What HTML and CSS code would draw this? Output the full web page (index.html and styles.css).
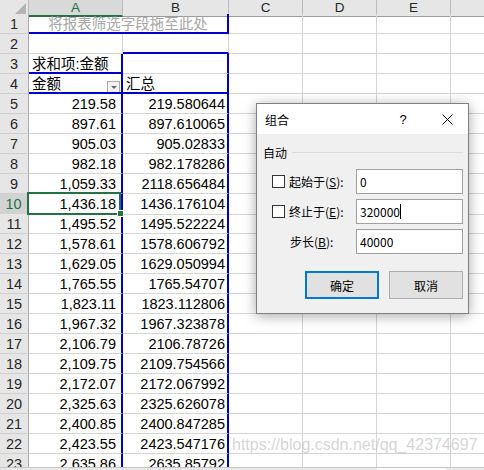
FILE: index.html
```html
<!DOCTYPE html>
<html lang="zh-CN">
<head>
    <meta charset="UTF-8">
    <title>数据透视表 - 组合</title>
    <link rel="stylesheet" href="styles.css">
</head>
<body>
    <div class="page">
        <div class="sheet">
            <div class="row head">
                <div class="corner">
                    <svg width="11" height="11" viewBox="0 0 11 11"><polygon points="11,0 11,11 0,11" fill="#b4b4b4"/></svg>
                </div>
                <div class="ch on">A</div><div class="ch">B</div><div class="ch">C</div><div class="ch">D</div><div class="ch">E</div><div class="ch"></div>
            </div>
            <div class="row">
                <div class="rh">1</div>
                <div class="c span2 filter bx-b bx-r">将报表筛选字段拖至此处</div>
                <div class="c"></div><div class="c"></div><div class="c"></div><div class="c"></div>
            </div>
            <div class="row">
                <div class="rh">2</div>
                <div class="c"></div><div class="c bx-b"></div>
                <div class="c"></div><div class="c"></div><div class="c"></div><div class="c"></div>
            </div>
            <div class="row">
                <div class="rh">3</div>
                <div class="c bx-b bx-r">求和项:金额</div><div class="c bx-r"></div>
                <div class="c"></div><div class="c"></div><div class="c"></div><div class="c"></div>
            </div>
            <div class="row">
                <div class="rh">4</div>
                <div class="c field-head bx-b bx-r"><span>金额</span><span class="drop"></span></div>
                <div class="c bx-b bx-r">汇总</div>
                <div class="c"></div><div class="c"></div><div class="c"></div><div class="c"></div>
            </div>
            <div class="row"><div class="rh">5</div><div class="c num bx-r">219.58</div><div class="c num bx-r">219.580644</div><div class="c"></div><div class="c"></div><div class="c"></div><div class="c"></div></div>
            <div class="row"><div class="rh">6</div><div class="c num bx-r">897.61</div><div class="c num bx-r">897.610065</div><div class="c"></div><div class="c"></div><div class="c"></div><div class="c"></div></div>
            <div class="row"><div class="rh">7</div><div class="c num bx-r">905.03</div><div class="c num bx-r">905.02833</div><div class="c"></div><div class="c"></div><div class="c"></div><div class="c"></div></div>
            <div class="row"><div class="rh">8</div><div class="c num bx-r">982.18</div><div class="c num bx-r">982.178286</div><div class="c"></div><div class="c"></div><div class="c"></div><div class="c"></div></div>
            <div class="row"><div class="rh">9</div><div class="c num bx-r">1,059.33</div><div class="c num bx-r">2118.656484</div><div class="c"></div><div class="c"></div><div class="c"></div><div class="c"></div></div>
            <div class="row"><div class="rh on">10</div><div class="c num bx-r active">1,436.18</div><div class="c num bx-r">1436.176104</div><div class="c"></div><div class="c"></div><div class="c"></div><div class="c"></div></div>
            <div class="row"><div class="rh">11</div><div class="c num bx-r">1,495.52</div><div class="c num bx-r">1495.522224</div><div class="c"></div><div class="c"></div><div class="c"></div><div class="c"></div></div>
            <div class="row"><div class="rh">12</div><div class="c num bx-r">1,578.61</div><div class="c num bx-r">1578.606792</div><div class="c"></div><div class="c"></div><div class="c"></div><div class="c"></div></div>
            <div class="row"><div class="rh">13</div><div class="c num bx-r">1,629.05</div><div class="c num bx-r">1629.050994</div><div class="c"></div><div class="c"></div><div class="c"></div><div class="c"></div></div>
            <div class="row"><div class="rh">14</div><div class="c num bx-r">1,765.55</div><div class="c num bx-r">1765.54707</div><div class="c"></div><div class="c"></div><div class="c"></div><div class="c"></div></div>
            <div class="row"><div class="rh">15</div><div class="c num bx-r">1,823.11</div><div class="c num bx-r">1823.112806</div><div class="c"></div><div class="c"></div><div class="c"></div><div class="c"></div></div>
            <div class="row"><div class="rh">16</div><div class="c num bx-r">1,967.32</div><div class="c num bx-r">1967.323878</div><div class="c"></div><div class="c"></div><div class="c"></div><div class="c"></div></div>
            <div class="row"><div class="rh">17</div><div class="c num bx-r">2,106.79</div><div class="c num bx-r">2106.78726</div><div class="c"></div><div class="c"></div><div class="c"></div><div class="c"></div></div>
            <div class="row"><div class="rh">18</div><div class="c num bx-r">2,109.75</div><div class="c num bx-r">2109.754566</div><div class="c"></div><div class="c"></div><div class="c"></div><div class="c"></div></div>
            <div class="row"><div class="rh">19</div><div class="c num bx-r">2,172.07</div><div class="c num bx-r">2172.067992</div><div class="c"></div><div class="c"></div><div class="c"></div><div class="c"></div></div>
            <div class="row"><div class="rh">20</div><div class="c num bx-r">2,325.63</div><div class="c num bx-r">2325.626078</div><div class="c"></div><div class="c"></div><div class="c"></div><div class="c"></div></div>
            <div class="row"><div class="rh">21</div><div class="c num bx-r">2,400.85</div><div class="c num bx-r">2400.847285</div><div class="c"></div><div class="c"></div><div class="c"></div><div class="c"></div></div>
            <div class="row"><div class="rh">22</div><div class="c num bx-r">2,423.55</div><div class="c num bx-r">2423.547176</div><div class="c"></div><div class="c"></div><div class="c"></div><div class="c"></div></div>
            <div class="row"><div class="rh">23</div><div class="c num bx-r">2,635.86</div><div class="c num bx-r">2635.85792</div><div class="c"></div><div class="c"></div><div class="c"></div><div class="c"></div></div>
        </div>
        <div class="tabbar">
            <div class="tb-left"></div><div class="tb-gap"></div><div class="tb-right"></div>
        </div>

        <div class="watermark">https://blog.csdn.net/qq_42374697</div>

        <div class="dialog">
            <div class="dlg-title">
                <span class="dlg-name">组合</span>
                <span class="dlg-help">?</span>
                <span class="dlg-close">
                    <svg width="11" height="11" viewBox="0 0 11 11"><path d="M0.5 0.5 L10.5 10.5 M10.5 0.5 L0.5 10.5" stroke="#000" stroke-width="1"/></svg>
                </span>
            </div>
            <div class="dlg-body">
                <div class="group"><span>自动</span><span class="rule"></span></div>
                <div class="field">
                    <span class="check"></span>
                    <span class="label">起始于(<u>S</u>):</span>
                    <div class="input">0</div>
                </div>
                <div class="field">
                    <span class="check"></span>
                    <span class="label">终止于(<u>E</u>):</span>
                    <div class="input">320000<span class="caret"></span></div>
                </div>
                <div class="field">
                    <span class="check hidden"></span>
                    <span class="label">步长(<u>B</u>):</span>
                    <div class="input">40000</div>
                </div>
                <div class="buttons">
                    <button class="btn default">确定</button>
                    <button class="btn">取消</button>
                </div>
            </div>
        </div>
    </div>
</body>
</html>
```

FILE: styles.css
```css
body {
    margin: 0;
    background-color: #fff;
    font-family: "Liberation Sans", "Noto Sans CJK SC", sans-serif;
    color: #000;
}
.page {
    position: relative;
    width: 484px;
    height: 470px;
    overflow: hidden;
}
.sheet {
    height: 467px;
    overflow: hidden;
}
.row {
    display: grid;
    grid-template-columns: 29px 94px 106px 74px 74px 74px 74px;
    height: 20px;
}
.row.head {
    height: 14px;
}
.row > div {
    box-sizing: border-box;
    overflow: hidden;
    white-space: nowrap;
}
.row > .ch,
.row > .rh {
    overflow: visible;
}
.corner {
    background-color: #e6e6e6;
    border-right: 1px solid #bcbcbc;
    border-bottom: 1px solid #9c9c9c;
    display: flex;
    justify-content: flex-end;
    align-items: flex-end;
    padding: 0 2px 2px 0;
}
.corner svg {
    display: block;
}
.ch {
    background-color: #e6e6e6;
    border-right: 1px solid #bcbcbc;
    border-bottom: 1px solid #9c9c9c;
    text-align: center;
    font-size: 13.5px;
    line-height: 15px;
    color: #262626;
}
.ch.on {
    background-color: #d9d9d9;
    color: #217346;
    border-bottom: 2px solid #217346;
}
.rh {
    background-color: #e6e6e6;
    border-right: 1px solid #ababab;
    border-bottom: 1px solid #cfcfcf;
    text-align: center;
    font-size: 14.5px;
    line-height: 18px;
    padding-top: 1px;
    color: #262626;
}
.rh.on {
    background-color: #d2d2d2;
    color: #217346;
    border-right: 2px solid #217346;
}
.c {
    border-right: 1px solid #d4d4d4;
    border-bottom: 1px solid #d4d4d4;
    font-size: 14.5px;
    line-height: 19px;
    padding: 1px 0 0 3px;
}
.span2 {
    grid-column: span 2;
}
.filter {
    text-align: center;
    color: #a6a6a6;
    padding-left: 0;
}
.num {
    text-align: right;
    padding-right: 2px;
}
.num.bx-r:nth-child(2) {
    padding-right: 5px;
}
.bx-r {
    border-right: 2px solid #0000cc;
}
.bx-b {
    border-bottom: 2px solid #0000cc;
}
.field-head {
    display: flex;
    justify-content: space-between;
}
.drop {
    width: 11px;
    height: 10px;
    margin: 6px 1px 0 0;
    border: 1px solid #ababab;
    background-color: #f2f2f2;
    position: relative;
}
.drop::after {
    content: "";
    position: absolute;
    left: 3px;
    top: 4px;
    border-left: 3px solid transparent;
    border-right: 3px solid transparent;
    border-top: 3px solid #666;
}
.row > .active {
    overflow: visible;
    position: relative;
}
.active::before {
    content: "";
    position: absolute;
    left: -2px;
    top: -2px;
    right: 0;
    bottom: -1px;
    border: 2px solid #217346;
}
.active::after {
    content: "";
    position: absolute;
    right: -3px;
    bottom: -3px;
    width: 5px;
    height: 5px;
    background-color: #217346;
    border: 1px solid #fff;
}
.tabbar {
    display: flex;
    height: 3px;
    border-top: 1px solid #c6c6c6;
    box-sizing: border-box;
}
.tb-left {
    width: 377px;
    background-color: #e8e8e8;
}
.tb-gap {
    width: 69px;
    background-color: #fff;
}
.tb-right {
    flex: 1;
    background-color: #e8e8e8;
}
.watermark {
    position: absolute;
    left: 232px;
    top: 436px;
    font-size: 16px;
    color: rgba(190, 190, 190, 0.65);
    white-space: nowrap;
}
.dialog {
    position: absolute;
    left: 256px;
    top: 103px;
    width: 213px;
    height: 211px;
    box-sizing: border-box;
    border: 1px solid #7f7f7f;
    background-color: #f0f0f0;
    box-shadow: 0 2px 12px rgba(0, 0, 0, 0.35);
    font-family: "Noto Sans CJK SC", "Liberation Sans", sans-serif;
    font-size: 12px;
}
.dlg-title {
    display: flex;
    align-items: center;
    height: 30px;
    background-color: #fff;
    padding-left: 8px;
}
.dlg-name {
    flex: 1;
}
.dlg-help {
    width: 30px;
    margin-right: 8px;
    text-align: center;
    font-family: "Liberation Sans", sans-serif;
    font-size: 13px;
}
.dlg-close {
    width: 42px;
    display: flex;
    justify-content: center;
}
.dlg-body {
    padding: 0 5px 0 6px;
}
.group {
    display: flex;
    align-items: center;
    height: 20px;
    margin-top: 8px;
    margin-bottom: 7px;
}
.rule {
    flex: 1;
    height: 1px;
    margin-left: 5px;
    background-color: #dcdcdc;
}
.field {
    display: flex;
    align-items: center;
    height: 25px;
    margin-bottom: 5px;
    padding-left: 9px;
}
.check {
    width: 13px;
    height: 13px;
    box-sizing: border-box;
    border: 1px solid #333;
    background-color: #fff;
    margin-right: 4px;
}
.check.hidden {
    visibility: hidden;
    margin-right: 5px;
}
.label {
    flex: 1;
}
.input {
    width: 107px;
    height: 25px;
    box-sizing: border-box;
    border: 1px solid #a0a0a0;
    background-color: #fff;
    padding-left: 3px;
    line-height: 23px;
    display: flex;
    align-items: center;
}
.caret {
    display: inline-block;
    width: 1px;
    height: 15px;
    background-color: #000;
}
.buttons {
    display: flex;
    justify-content: flex-end;
    gap: 10px;
    margin-top: 17px;
}
.btn {
    width: 74px;
    height: 28px;
    box-sizing: border-box;
    border: 1px solid #adadad;
    background-color: #e1e1e1;
    font-family: inherit;
    font-size: 12px;
    color: #000;
    padding: 0;
}
.btn.default {
    border: 2px solid #0078d7;
}
```
